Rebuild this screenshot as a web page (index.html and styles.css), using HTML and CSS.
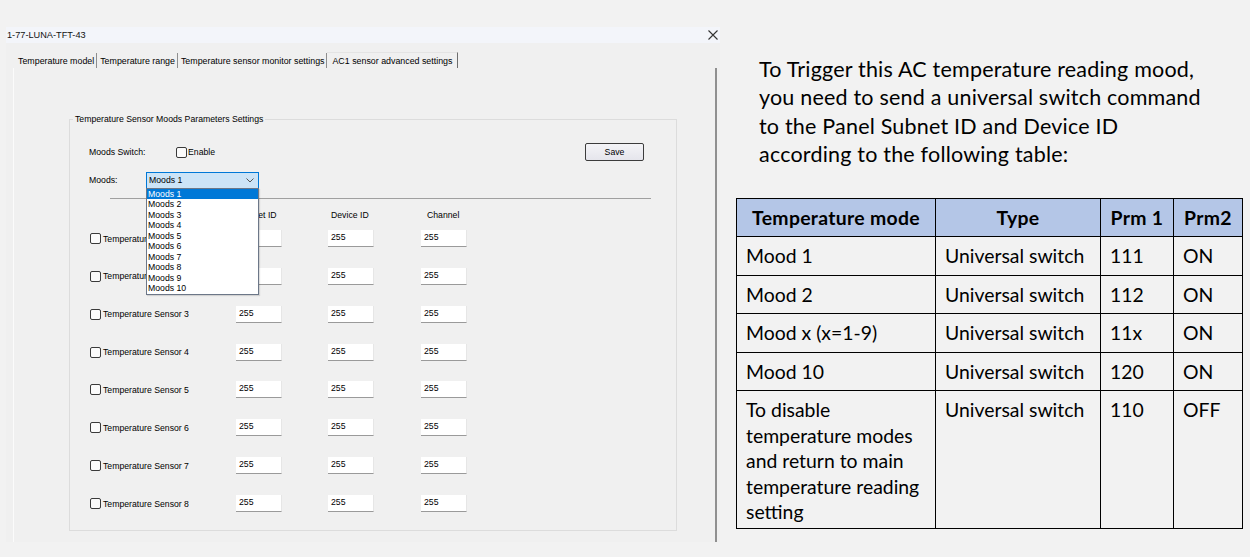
FILE: index.html
```html
<!DOCTYPE html>
<html>
<head>
<meta charset="utf-8">
<title>1-77-LUNA-TFT-43</title>
<link rel="stylesheet" href="styles.css">
</head>
<body>
<div class="page">
  <div class="window">
    <div class="titlebar">
      <span class="title">1-77-LUNA-TFT-43</span>
      <svg class="close" viewBox="0 0 10 10" width="10" height="10"><path d="M0.5 0.5 L9.5 9.5 M9.5 0.5 L0.5 9.5" stroke="#333" stroke-width="1.1" fill="none"/></svg>
    </div>
    <div class="tabs">
      <span class="tab first">Temperature model</span>
      <span class="tab">Temperature range</span>
      <span class="tab">Temperature sensor monitor settings</span>
      <span class="tab active">AC1 sensor advanced settings</span>
    </div>
    <div class="panel">
      <fieldset class="group">
        <legend>Temperature Sensor Moods Parameters Settings</legend>
        <div class="settings">
          <div class="row">
            <span class="lbl lbl-switch">Moods Switch:</span>
            <span class="check"></span><span class="check-text">Enable</span>
            <span class="save">Save</span>
          </div>
          <div class="row">
            <span class="lbl lbl-moods">Moods:</span>
            <div class="combo">
              <span class="combo-text">Moods 1</span>
              <svg class="chev" viewBox="0 0 8 5" width="8" height="5"><path d="M0.5 0.5 L4 4 L7.5 0.5" stroke="#555" stroke-width="1" fill="none"/></svg>
              <ul class="list">
                <li class="sel">Moods 1</li>
                <li>Moods 2</li>
                <li>Moods 3</li>
                <li>Moods 4</li>
                <li>Moods 5</li>
                <li>Moods 6</li>
                <li>Moods 7</li>
                <li>Moods 8</li>
                <li>Moods 9</li>
                <li>Moods 10</li>
              </ul>
            </div>
          </div>
        </div>
        <div class="sep"></div>
        <div class="heads">
          <span></span>
          <span class="h h1">Subnet ID</span>
          <span class="h h2">Device ID</span>
          <span class="h h3">Channel</span>
        </div>
        <div class="sensors">
          <div class="sensor"><span class="check"></span><span>Temperature Sensor 1</span></div>
          <div class="field">255</div><div class="field">255</div><div class="field">255</div>
          <div class="sensor"><span class="check"></span><span>Temperature Sensor 2</span></div>
          <div class="field">255</div><div class="field">255</div><div class="field">255</div>
          <div class="sensor"><span class="check"></span><span>Temperature Sensor 3</span></div>
          <div class="field">255</div><div class="field">255</div><div class="field">255</div>
          <div class="sensor"><span class="check"></span><span>Temperature Sensor 4</span></div>
          <div class="field">255</div><div class="field">255</div><div class="field">255</div>
          <div class="sensor"><span class="check"></span><span>Temperature Sensor 5</span></div>
          <div class="field">255</div><div class="field">255</div><div class="field">255</div>
          <div class="sensor"><span class="check"></span><span>Temperature Sensor 6</span></div>
          <div class="field">255</div><div class="field">255</div><div class="field">255</div>
          <div class="sensor"><span class="check"></span><span>Temperature Sensor 7</span></div>
          <div class="field">255</div><div class="field">255</div><div class="field">255</div>
          <div class="sensor"><span class="check"></span><span>Temperature Sensor 8</span></div>
          <div class="field">255</div><div class="field">255</div><div class="field">255</div>
        </div>
      </fieldset>
    </div>
  </div>

  <div class="info">
    <p class="intro">To Trigger this AC temperature reading mood,<br>you need to send a universal switch command<br>to the Panel Subnet ID and Device ID<br>according to the following table:</p>
    <table class="modes">
      <colgroup><col class="c1"><col class="c2"><col class="c3"><col class="c4"></colgroup>
      <thead>
        <tr><th>Temperature mode</th><th>Type</th><th>Prm 1</th><th>Prm2</th></tr>
      </thead>
      <tbody>
        <tr><td>Mood 1</td><td>Universal switch</td><td>111</td><td>ON</td></tr>
        <tr><td>Mood 2</td><td>Universal switch</td><td>112</td><td>ON</td></tr>
        <tr><td>Mood x (x=1-9)</td><td>Universal switch</td><td>11x</td><td>ON</td></tr>
        <tr><td>Mood 10</td><td>Universal switch</td><td>120</td><td>ON</td></tr>
        <tr class="last"><td>To disable<br>temperature modes<br>and return to main<br>temperature reading<br>setting</td><td>Universal switch</td><td>110</td><td>OFF</td></tr>
      </tbody>
    </table>
  </div>
</div>
</body>
</html>
```

FILE: styles.css
```css
* { box-sizing: border-box; }
html, body { margin: 0; padding: 0; }
body {
  background: #f2f2f2;
  width: 1250px;
  height: 557px;
  overflow: hidden;
  font-family: "Liberation Sans", Arial, sans-serif;
  color: #000;
}
.page { display: flex; align-items: flex-start; }

/* ---------- dialog window ---------- */
.window {
  flex: none;
  margin: 27px 0 0 6px;
  width: 714px;
  height: 515px;
  background: #f0f0f0;
  display: flex;
  flex-direction: column;
}
.titlebar {
  flex: none;
  height: 16px;
  background: #f3f5fa;
  display: flex;
  align-items: center;
  justify-content: space-between;
  padding: 0 2px 0 1px;
  font-size: 9.2px;
  color: #111;
}
.close { display: block; }

.tabs {
  flex: none;
  height: 25px;
  padding: 10px 0 0 9px;
  display: flex;
  align-items: flex-end;
  font-size: 8.85px;
}
.tab {
  height: 15px;
  line-height: 16px;
  padding: 0 2px 0 3px;
  border-right: 1px solid #8e8e8e;
  white-space: nowrap;
}
.tab.active {
  height: 16px;
  padding: 0 5px 0 5px;
  border-right: 1px solid #6e6e6e;
  border-top: 1px solid #e4e4e4;
  background: #f0f0f0;
}

.panel {
  flex: 1;
  margin-left: 7px;
  width: 704px;
  border-left: 1px solid #fbfbfb;
  border-right: 2px solid #8f8f8f;
  display: flex;
  flex-direction: column;
  align-items: flex-start;
}

/* ---------- group box ---------- */
.group {
  margin: 46px 0 0 55px;
  width: 608px;
  min-width: 0;
  border: 1px solid #dcdcdc;
  padding: 0 0 18px 0;
  font-size: 8.7px;
}
.group legend {
  margin-left: 3px;
  padding: 0 2px;
  line-height: 11px;
  font-size: 8.7px;
}

.settings { padding: 18px 32px 0 19px; }
.row {
  display: flex;
  align-items: center;
  height: 18px;
}
.row + .row { margin-top: 10px; }
.lbl-switch { width: 87px; }
.lbl-moods { width: 57px; }

.check {
  flex: none;
  display: inline-block;
  width: 11px;
  height: 11px;
  border: 1px solid #3a3a3a;
  border-radius: 2px;
  background: #fbfbfb;
}
.check-text { margin-left: 1px; }

.save {
  margin-left: auto;
  width: 59px;
  height: 18px;
  border: 1px solid #3c3c3c;
  border-radius: 2px;
  background: linear-gradient(#f4f4f7, #e5e5ec);
  display: flex;
  align-items: center;
  justify-content: center;
}

.combo {
  position: relative;
  width: 113px;
  height: 17px;
  border: 1px solid #0078d7;
  background: #cce4f7;
  display: flex;
  align-items: center;
  justify-content: space-between;
  padding: 0 4px 0 2px;
}
.chev { display: block; }
.list {
  position: absolute;
  z-index: 5;
  top: 15px;
  left: -1px;
  width: 113px;
  margin: 0;
  padding: 0;
  list-style: none;
  background: #fff;
  border: 1px solid #6c7788;
  box-shadow: 1px 1px 1px rgba(0,0,0,0.12);
}
.list li {
  height: 10.5px;
  line-height: 10.5px;
  padding-left: 1px;
  white-space: nowrap;
}
.list li.sel { background: #0078d7; color: #fff; }

.sep {
  margin: 9px 0 0 40px;
  width: 541px;
  height: 1px;
  background: #a0a0a0;
}

.heads, .sensors {
  display: grid;
  grid-template-columns: 146px 92px 93px 46px;
  padding-left: 20px;
}
.heads {
  margin-top: 11px;
  height: 11px;
  line-height: 11px;
}
.h1 { padding-left: 2px; }
.h2 { padding-left: 3px; }
.h3 { padding-left: 6px; }

.sensors {
  margin-top: 9px;
  grid-auto-rows: 17px;
  row-gap: 20.86px;
}
.sensor {
  display: flex;
  align-items: center;
  gap: 2px;
  white-space: nowrap;
}
.field {
  width: 46px;
  height: 17px;
  background: #fff;
  border-bottom: 1px solid #9a9a9a;
  border-right: 1px solid #e6e6e6;
  padding: 2px 0 0 3px;
  line-height: 11px;
}

/* ---------- right side info ---------- */
.info {
  flex: 1;
  padding: 55px 0 0 16px;
  font-family: Lato, "Liberation Sans", sans-serif;
}
.intro {
  margin: 0 0 0 23px;
  font-size: 21.5px;
  letter-spacing: 0.2px;
  line-height: 28.4px;
  white-space: nowrap;
}
.modes {
  margin-top: 29px;
  width: 506px;
  table-layout: fixed;
  border-collapse: collapse;
  font-size: 19.4px;
  line-height: 25.5px;
}
.c1 { width: 199px; }
.c2 { width: 165px; }
.c3 { width: 73px; }
.c4 { width: 69px; }
.modes th, .modes td {
  border: 1px solid #000;
  padding: 6px 9px;
  vertical-align: top;
  white-space: nowrap;
}
.modes th {
  background: #b4c6e7;
  font-weight: bold;
  text-align: center;
  padding: 6px 2px;
  letter-spacing: 0.3px;
}
.modes td { text-align: left; }
.modes tr.last td { padding-bottom: 3px; }
```
